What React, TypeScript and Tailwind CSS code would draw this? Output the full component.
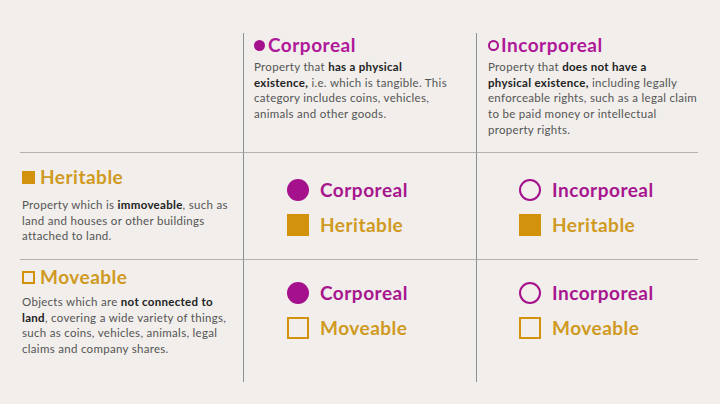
import React from "react"

const MAGENTA = "text-[#a8168f]"
const GOLD = "text-[#d09a22]"

function Dot({ filled, size = "w-[22px] h-[22px]" }: { filled: boolean; size?: string }) {
  return (
    <span
      className={`inline-block shrink-0 rounded-full ${size} ${
        filled ? "bg-[#a5108d]" : "border-[2px] border-[#a5108d]"
      }`}
    />
  )
}

function Square({ filled, size = "w-[22px] h-[22px]" }: { filled: boolean; size?: string }) {
  return (
    <span
      className={`inline-block shrink-0 ${size} ${
        filled ? "bg-[#d3920c]" : "border-[2px] border-[#d3920c]"
      }`}
    />
  )
}

function Combo({ corporeal, heritable }: { corporeal: boolean; heritable: boolean }) {
  return (
    <div className="flex flex-col gap-[13px]">
      <div className="flex items-center gap-[11px]">
        <Dot filled={corporeal} />
        <span className={`text-[19px] leading-[22px] font-bold tracking-[0.5px] ${MAGENTA}`}>
          {corporeal ? "Corporeal" : "Incorporeal"}
        </span>
      </div>
      <div className="flex items-center gap-[11px]">
        <Square filled={heritable} />
        <span className={`text-[19px] leading-[22px] font-bold tracking-[0.5px] ${GOLD}`}>
          {heritable ? "Heritable" : "Moveable"}
        </span>
      </div>
    </div>
  )
}

export default function App() {
  return (
    <div
      className="w-[720px] h-[404px] bg-[#f1eeeb] overflow-hidden pt-[33px] pl-[20px]"
      style={{ fontFamily: "Lato, 'Open Sans', sans-serif" }}
    >
      <div className="grid grid-cols-[223px_233px_222px] grid-rows-[119px_107px_123px] text-[11.5px] leading-[15.7px] tracking-[0.3px] text-[#555]">
        {/* header row */}
        <div />
        <div className="border-l border-[#8f8f8f] pl-[10px] pt-[2px]">
          <div className="flex items-center gap-[3px]">
            <Dot filled size="w-[11px] h-[11px]" />
            <span className="text-[19px] leading-[20px] font-bold tracking-[0.5px] text-[#b0189a]">Corporeal</span>
          </div>
          <p className="mt-[4px] whitespace-nowrap">
            Property that <b className="text-[#222]">has a physical</b>
            <br />
            <b className="text-[#222]">existence,</b> i.e. which is tangible. This
            <br />
            category includes coins, vehicles,
            <br />
            animals and other goods.
          </p>
        </div>
        <div className="border-l border-[#8f8f8f] pl-[11px] pt-[2px]">
          <div className="flex items-center gap-[2px]">
            <Dot filled={false} size="w-[11px] h-[11px]" />
            <span className="text-[19px] leading-[20px] font-bold tracking-[0.5px] text-[#b0189a]">Incorporeal</span>
          </div>
          <p className="mt-[4px] whitespace-nowrap">
            Property that <b className="text-[#222]">does not have a</b>
            <br />
            <b className="text-[#222]">physical existence,</b> including legally
            <br />
            enforceable rights, such as a legal claim
            <br />
            to be paid money or intellectual
            <br />
            property rights.
          </p>
        </div>

        {/* heritable row */}
        <div className="border-t border-[#b3b0ad] pl-[2px] pt-[14px]">
          <div className="flex items-center gap-[5px]">
            <Square filled size="w-[13px] h-[13px]" />
            <span className={`text-[19px] leading-[20px] font-bold tracking-[0.5px] ${GOLD}`}>Heritable</span>
          </div>
          <p className="mt-[10px] whitespace-nowrap">
            Property which is <b className="text-[#222]">immoveable</b>, such as
            <br />
            land and houses or other buildings
            <br />
            attached to land.
          </p>
        </div>
        <div className="border-t border-l border-t-[#b3b0ad] border-l-[#8f8f8f] pl-[43px] pt-[26px]">
          <Combo corporeal heritable />
        </div>
        <div className="border-t border-l border-t-[#b3b0ad] border-l-[#8f8f8f] pl-[42px] pt-[26px]">
          <Combo corporeal={false} heritable />
        </div>

        {/* moveable row */}
        <div className="border-t border-[#b3b0ad] pl-[2px] pt-[7px]">
          <div className="flex items-center gap-[5px]">
            <Square filled={false} size="w-[13px] h-[13px]" />
            <span className={`text-[19px] leading-[20px] font-bold tracking-[0.5px] ${GOLD}`}>Moveable</span>
          </div>
          <p className="mt-[7px] whitespace-nowrap">
            Objects which are <b className="text-[#222]">not connected to</b>
            <br />
            <b className="text-[#222]">land</b>, covering a wide variety of things,
            <br />
            such as coins, vehicles, animals, legal
            <br />
            claims and company shares.
          </p>
        </div>
        <div className="border-t border-l border-t-[#b3b0ad] border-l-[#8f8f8f] pl-[43px] pt-[22px]">
          <Combo corporeal heritable={false} />
        </div>
        <div className="border-t border-l border-t-[#b3b0ad] border-l-[#8f8f8f] pl-[42px] pt-[22px]">
          <Combo corporeal={false} heritable={false} />
        </div>
      </div>
    </div>
  )
}
